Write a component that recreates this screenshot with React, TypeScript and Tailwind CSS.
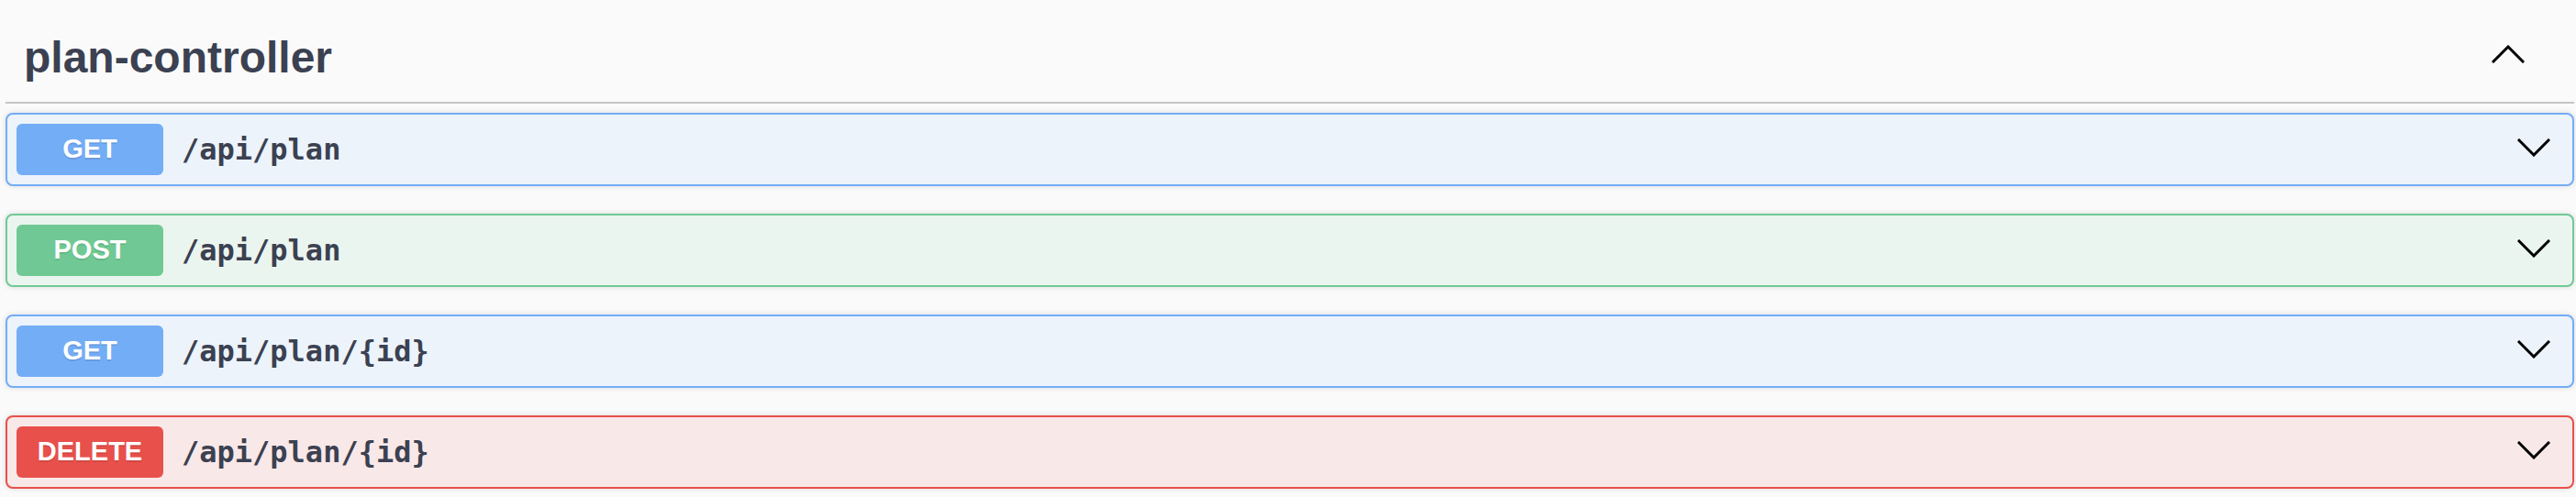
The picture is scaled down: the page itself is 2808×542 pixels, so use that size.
import React from 'react';

interface Endpoint {
  method: 'GET' | 'POST' | 'DELETE';
  path: string;
}

const endpoints: Endpoint[] = [
  { method: 'GET', path: '/api/plan' },
  { method: 'POST', path: '/api/plan' },
  { method: 'GET', path: '/api/plan/{id}' },
  { method: 'DELETE', path: '/api/plan/{id}' },
];

const styles = {
  GET: { box: 'border-[#73adf6] bg-[#ecf3fb]', badge: 'bg-[#73adf6]' },
  POST: { box: 'border-[#70c994] bg-[#ebf5ef]', badge: 'bg-[#70c994]' },
  DELETE: { box: 'border-[#e8504b] bg-[#f9e8e8]', badge: 'bg-[#e8504b]' },
};

const Chevron = ({ up = false }: { up?: boolean }) => (
  <svg width="36" height="20" viewBox="0 0 36 20" fill="none">
    <polyline
      points={up ? '2,18 18,2 34,18' : '2,2 18,18 34,2'}
      stroke="#000"
      strokeWidth="3"
      strokeLinecap="square"
    />
  </svg>
);

const App: React.FC = () => {
  return (
    <div className="min-h-screen w-full bg-[#fafafa] pl-[6px] pr-[2px] font-['Liberation_Sans',Arial,sans-serif]">
      <div className="flex justify-between h-[113px] border-b-2 border-[#c5c5c7] pl-[20px]">
        <span className="mt-[39px] text-[48px] leading-[48px] font-bold text-[#3b4151]">plan-controller</span>
        <div className="mt-[49px] mr-[54px]">
          <Chevron up />
        </div>
      </div>

      <div className="mt-[10px]">
        {endpoints.map((ep, i) => (
          <div
            key={i}
            className={`flex items-center h-[80px] mb-[30px] border-2 rounded-[8px] px-[10px] shadow-[0_0_6px_rgba(0,0,0,0.12)] ${styles[ep.method].box}`}
          >
            <div
              className={`flex items-center justify-center w-[160px] h-[56px] rounded-[6px] text-white font-bold text-[29px] [text-shadow:0_2px_0_rgba(0,0,0,0.1)] ${styles[ep.method].badge}`}
            >
              {ep.method}
            </div>
            <span className="pl-[20px] text-[32px] font-semibold text-[#3b4151] font-['DejaVu_Sans_Mono',monospace]">
              {ep.path}
            </span>
            <div className="ml-auto mr-[14px] mb-[5px]">
              <Chevron />
            </div>
          </div>
        ))}
      </div>
    </div>
  );
};

export default App;
